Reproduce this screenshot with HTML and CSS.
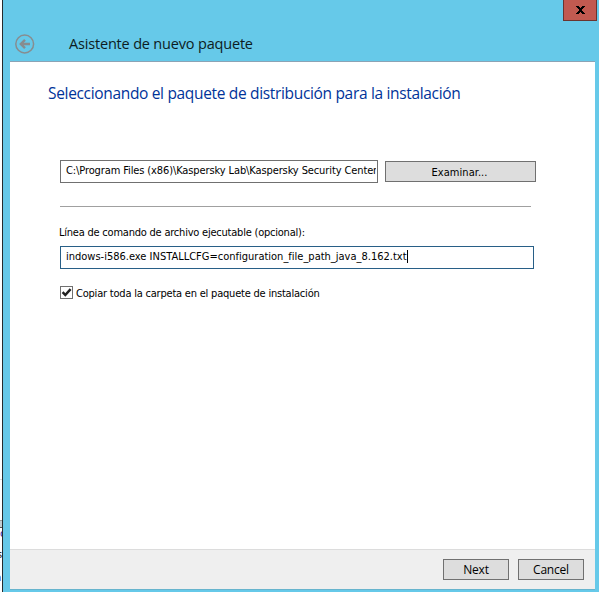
FILE: index.html
```html
<!DOCTYPE html>
<html lang="es">
<head>
<meta charset="utf-8">
<title>Asistente de nuevo paquete</title>
<link rel="stylesheet" href="styles.css">
</head>
<body>
<div class="desktop">
  <div class="behind">
    <span class="rule"></span>
    <span class="bar"></span>
    <span class="scrap scrap-c">c</span>
    <span class="scrap scrap-s">s</span>
    <span class="scrap scrap-n">n</span>
  </div>
  <main class="window">
    <header class="titlebar">
      <svg class="back" width="20" height="20" viewBox="0 0 20 20" fill="none" stroke="#878d90">
        <circle cx="9.7" cy="10" r="8.9" stroke-width="1.5"/>
        <path d="M15 10H6M10 5.8L5.8 10L10 14.2" stroke-width="2.4"/>
      </svg>
      <h1 class="title">Asistente de nuevo paquete</h1>
      <button class="close" aria-label="Cerrar">
        <svg width="9" height="8" viewBox="0 0 9 8" shape-rendering="crispEdges"><path d="M0 0H3V1H4V2H5V1H6V0H9V1H8V2H7V3H6V5H7V6H8V7H9V8H6V7H5V6H4V7H3V8H0V7H1V6H2V5H3V3H2V2H1V1H0Z" fill="#000"/></svg>
      </button>
    </header>
    <section class="content">
      <h2 class="heading"><span>Seleccionando el paquete de distribución para la instalación</span></h2>
      <div class="picker">
        <div class="field path"><span class="path-text">C:\Program Files (x86)\Kaspersky Lab\Kaspersky Security Center</span></div>
        <button class="btn browse"><span>Examinar...</span></button>
      </div>
      <div class="divider"></div>
      <div class="label"><span>Línea de comando de archivo ejecutable (opcional):</span></div>
      <div class="field command"><span class="command-text">indows-i586.exe INSTALLCFG=configuration_file_path_java_8.162.txt</span><i class="caret"></i></div>
      <div class="check">
        <svg class="box" width="13" height="13" viewBox="0 0 13 13"><rect x=".5" y=".5" width="12" height="12" fill="#fff" stroke="#707070"/><path d="M2.6 6.2L5.3 9L10.6 3.2" fill="none" stroke="#212121" stroke-width="2.5"/></svg>
        <span class="check-text">Copiar toda la carpeta en el paquete de instalación</span>
      </div>
    </section>
    <footer class="footer">
      <button class="btn"><span>Next</span></button>
      <button class="btn"><span>Cancel</span></button>
    </footer>
  </main>
</div>
</body>
</html>
```
FILE: styles.css
```css
* { box-sizing: border-box; }
body { margin: 0; background: #fff; color: #000; }
h1, h2 { margin: 0; font-weight: 400; }
button { margin: 0; padding: 0; color: #000; }
.desktop { display: flex; width: 599px; height: 592px; overflow: hidden; }
.behind { position: relative; width: 2px; overflow: hidden; font: 11px/14px "DejaVu Sans Condensed", sans-serif; color: #2c24a0; }
.rule, .bar, .scrap { position: absolute; left: 0; }
.rule { top: 479px; width: 2px; height: 1px; background: #dcdcdc; }
.bar { top: 520px; width: 2px; height: 8px; background: #c3cdd2; border-top: 1px solid #999; border-bottom: 1px solid #555; }
.scrap-c { top: 527px; }
.scrap-s { top: 548px; left: -3px; color: #222; }
.scrap-n { top: 571px; left: -5px; }
.window { flex: 1; display: flex; flex-direction: column; border-left: 1px solid #252b2e; background: #66c9e9; padding: 0 4px 2px 7px; }
.titlebar { display: flex; height: 61px; position: relative; }
.back { margin: 34px 0 0 5px; }
.title { margin: 33px 0 0 34px; font: 14.5px/22px "Open Sans", sans-serif; letter-spacing: -.18px; white-space: nowrap; color: #0d1c22; }
.close { position: absolute; right: -2px; top: -1px; width: 34px; height: 22px; border: 1px solid #6b342f; background: #c25a50; display: flex; align-items: center; justify-content: center; padding-left: 1px; }
.content { height: 488px; padding: 20px 0 0 38px; background: #fff; border-top: 1px solid #8ba3b5; font: 11px/14px "DejaVu Sans Condensed", sans-serif; white-space: nowrap; }
.heading { font: 15.5px/22px "Open Sans", sans-serif; letter-spacing: -.33px; color: #003399; }
.picker { display: flex; align-items: flex-start; gap: 7px; margin: 56px 0 0 12px; }
.field { display: flex; background: #fff; border: 1px solid #707070; height: 23px; }
.path { width: 318px; padding: 3px 1px 0 5px; }
.path-text { overflow: hidden; letter-spacing: -.11px; }
.btn { display: flex; align-items: center; justify-content: center; background: #ddd; border: 1px solid #707070; width: 66px; height: 21px; font: 12px/18px "Open Sans", sans-serif; letter-spacing: -.2px; }
.browse { width: 151px; margin-top: 1px; padding: 2px 2px 0 0; font: 11px/14px "DejaVu Sans Condensed", sans-serif; letter-spacing: .05px; }
.divider { width: 471px; height: 1px; margin: 23px 0 0 12px; background: #a0a0a0; }
.label { margin: 19px 0 0 11px; letter-spacing: -.22px; }
.command { width: 474px; margin: 6px 0 0 12px; padding: 3px 0 0 5px; border-color: #285f87; }
.command-text { letter-spacing: 0; }
.caret { width: 1px; height: 13px; background: #000; }
.check { display: flex; margin: 17px 0 0 12px; gap: 3px; }
.check-text { position: relative; top: 1px; letter-spacing: -.21px; }
.footer { display: flex; justify-content: flex-end; gap: 9px; height: 41px; padding: 9px 11px 0 0; background: #efefef; border-top: 1px solid #dcdcdc; border-bottom: 1px solid #67b4cd; }
```
